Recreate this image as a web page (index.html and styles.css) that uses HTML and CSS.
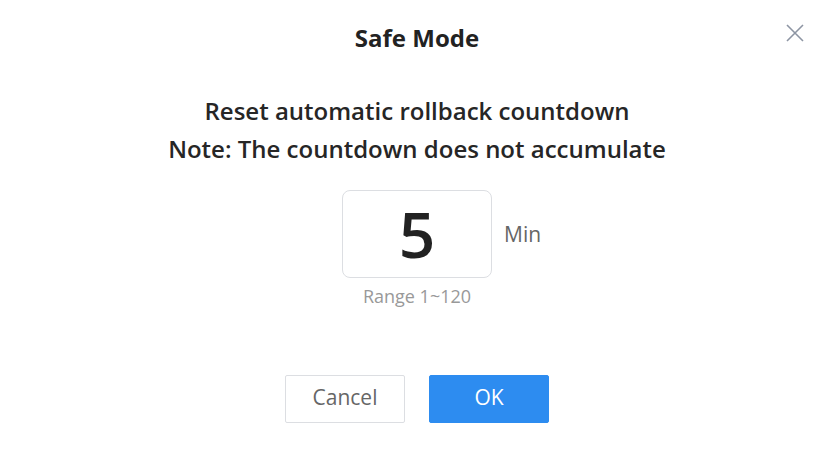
FILE: index.html
```html
<!DOCTYPE html>
<html lang="en">
<head>
<meta charset="utf-8">
<title>Safe Mode</title>
<link rel="stylesheet" href="styles.css">
</head>
<body>
<div class="dialog">
  <div class="header">
    <h1 class="title">Safe Mode</h1>
    <button class="close" aria-label="Close">
      <svg width="18" height="18" viewBox="0 0 18 18"><path d="M1 1 L17 17 M17 1 L1 17" stroke="#8d95a3" stroke-width="1.6" fill="none"/></svg>
    </button>
  </div>
  <div class="message">
    <p>Reset automatic rollback countdown</p>
    <p>Note: The countdown does not accumulate</p>
  </div>
  <div class="field">
    <div class="box"><span class="value">5</span></div>
    <div class="unit">Min</div>
    <div class="range">Range 1~120</div>
  </div>
  <div class="actions">
    <button class="btn cancel">Cancel</button>
    <button class="btn ok">OK</button>
  </div>
</div>
</body>
</html>
```

FILE: styles.css
```css
* { box-sizing: border-box; }
html, body { margin: 0; padding: 0; background: #fff; }
body {
  font-family: "Open Sans", "Noto Sans", sans-serif;
  color: #262626;
  width: 834px;
  height: 456px;
  overflow: hidden;
}
.dialog {
  width: 834px;
  height: 456px;
  display: flex;
  flex-direction: column;
  align-items: stretch;
}
.header {
  position: relative;
  padding-top: 22px;
  text-align: center;
}
.title {
  margin: 0;
  font-size: 24px;
  font-weight: 700;
  line-height: 32px;
  color: #222;
}
.close {
  position: absolute;
  top: 24px;
  right: 30px;
  width: 18px;
  height: 18px;
  padding: 0;
  border: 0;
  background: none;
  display: flex;
}
.message {
  margin-top: 38px;
  text-align: center;
}
.message p {
  margin: 0;
  font-size: 24px;
  font-weight: 600;
  line-height: 38px;
  color: #262626;
}
.field {
  margin-top: 22px;
  display: grid;
  grid-template-columns: 1fr 150px 1fr;
  grid-template-rows: 88px auto;
  row-gap: 6px;
}
.box {
  grid-column: 2;
  grid-row: 1;
  border: 1px solid #dcdee2;
  border-radius: 8px;
  display: flex;
  align-items: center;
  justify-content: center;
}
.value {
  font-size: 64px;
  font-weight: 600;
  line-height: 1;
  color: #222;
}
.unit {
  grid-column: 3;
  grid-row: 1;
  align-self: center;
  padding-left: 12px;
  font-size: 21px;
  color: #666;
}
.range {
  grid-column: 2;
  grid-row: 2;
  text-align: center;
  font-size: 18px;
  line-height: 24px;
  color: #999;
  white-space: nowrap;
}
.actions {
  margin-top: 67px;
  display: flex;
  justify-content: center;
  gap: 24px;
}
.btn {
  width: 120px;
  height: 48px;
  border-radius: 2px;
  font-family: inherit;
  font-size: 21px;
  line-height: 1;
  padding: 0 0 3px;
}
.cancel {
  background: #fff;
  border: 1px solid #dcdee2;
  color: #666;
}
.ok {
  background: #2d8cf0;
  border: 1px solid #2d8cf0;
  color: #fff;
}
```
